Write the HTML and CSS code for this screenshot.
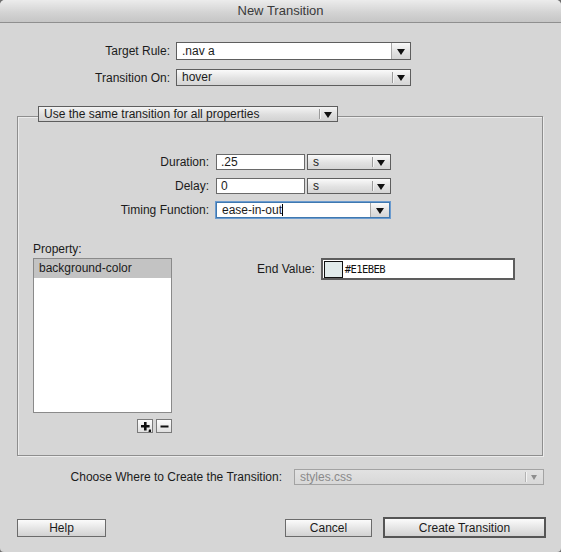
FILE: index.html
```html
<!DOCTYPE html>
<html>
<head>
<meta charset="utf-8">
<title>New Transition</title>
<link rel="stylesheet" href="styles.css">
</head>
<body>
<div class="window">
  <div class="titlebar">New Transition</div>
  <div class="content">
    <div class="top-form">
      <div class="row">
        <span class="lbl top-lbl">Target Rule:</span>
        <div class="select combo top-sel tall">
          <span class="val">.nav a</span>
          <span class="btn"><i class="arrow"></i></span>
        </div>
      </div>
      <div class="row row2">
        <span class="lbl top-lbl">Transition On:</span>
        <div class="select top-sel mid">
          <span class="val">hover</span>
          <span class="btn divided"><i class="arrow"></i></span>
        </div>
      </div>
    </div>

    <div class="group">
      <div class="select legend">
        <span class="val">Use the same transition for all properties</span>
        <span class="btn divided"><i class="arrow"></i></span>
      </div>

      <div class="timing">
        <div class="trow">
          <span class="lbl t-lbl">Duration:</span>
          <div class="input num">.25</div>
          <div class="select unit">
            <span class="val">s</span>
            <span class="btn divided"><i class="arrow"></i></span>
          </div>
        </div>
        <div class="trow">
          <span class="lbl t-lbl">Delay:</span>
          <div class="input num">0</div>
          <div class="select unit">
            <span class="val">s</span>
            <span class="btn divided"><i class="arrow"></i></span>
          </div>
        </div>
        <div class="trow">
          <span class="lbl t-lbl">Timing Function:</span>
          <div class="select combo focus">
            <span class="val">ease-in-out<i class="caret"></i></span>
            <span class="btn"><i class="arrow"></i></span>
          </div>
        </div>
      </div>

      <div class="props">
        <div class="prop-col">
          <div class="lbl prop-lbl">Property:</div>
          <div class="listbox">
            <div class="item selected">background-color</div>
          </div>
          <div class="pm">
            <span class="pmbtn plus">
              <svg width="11" height="11" viewBox="0 0 11 11"><path d="M4 1h2.6v3H9.6v2.6H6.6v3H4v-3H1V4h3z" fill="#111"/><path d="M9 8.5h2v2.5H8.5z" fill="#111"/></svg>
            </span>
            <span class="pmbtn minus">
              <svg width="11" height="11" viewBox="0 0 11 11"><rect x="1.5" y="4.5" width="8" height="2" fill="#111"/></svg>
            </span>
          </div>
        </div>
        <div class="end-col">
          <span class="lbl">End Value:</span>
          <div class="color-input">
            <span class="swatch"></span>
            <span class="hex">#E1EBEB</span>
          </div>
        </div>
      </div>
    </div>

    <div class="where-row">
      <span class="lbl">Choose Where to Create the Transition:</span>
      <div class="select disabled where-sel">
        <span class="val">styles.css</span>
        <span class="btn divided"><i class="arrow"></i></span>
      </div>
    </div>

    <div class="buttons">
      <button class="pbtn help">Help</button>
      <div class="spacer"></div>
      <button class="pbtn cancel">Cancel</button>
      <button class="pbtn default">Create Transition</button>
    </div>
  </div>
</div>
</body>
</html>
```

FILE: styles.css
```css
html, body {
  margin: 0;
  padding: 0;
  background: #6e6e6e;
}
body {
  font-family: "Liberation Sans", Arial, sans-serif;
  font-size: 12px;
  color: #1b1b1b;
}
.window {
  width: 561px;
  height: 552px;
  background: #d6d6d6;
  border-radius: 5px 5px 4px 4px;
  overflow: hidden;
}
.titlebar {
  height: 22px;
  line-height: 22px;
  text-align: center;
  font-size: 13px;
  color: #3a3a3a;
  background: linear-gradient(#ececec, #d2d2d2 60%, #c6c6c6);
  border-bottom: 1px solid #8f8f8f;
}
.content {
  padding-top: 19px;
}
.lbl {
  white-space: nowrap;
}
.row {
  display: flex;
  align-items: center;
}
.row2 {
  margin-top: 9px;
}
.top-lbl {
  width: 170px;
  text-align: right;
  margin-right: 6px;
}

/* select widget */
.select {
  display: flex;
  box-sizing: border-box;
  border: 1px solid #5e5e5e;
  background: linear-gradient(#fafafa, #e2e2e2 55%, #d5d5d5);
  height: 16px;
  align-items: stretch;
}
.select .val {
  flex: 1;
  padding-left: 5px;
  line-height: 14px;
  white-space: nowrap;
  overflow: hidden;
  position: relative;
}
.select .btn {
  width: 18px;
  display: flex;
  align-items: center;
  justify-content: center;
  position: relative;
}
.select .btn.divided::before {
  content: "";
  position: absolute;
  left: 0;
  top: 2px;
  bottom: 2px;
  border-left: 1px solid #9a9a9a;
  box-shadow: 1px 0 0 #f4f4f4;
}
.arrow {
  display: block;
  width: 0;
  height: 0;
  border-left: 4px solid transparent;
  border-right: 4px solid transparent;
  border-top: 6px solid #111;
  margin-top: 1px;
}
.select.combo .val {
  background: #fff;
}
.select.combo .btn {
  border-left: 1px solid #a8a8a8;
}
.top-sel {
  width: 235px;
}
.top-sel.tall {
  height: 18px;
}
.top-sel.tall .val {
  line-height: 16px;
}
.top-sel.mid {
  height: 17px;
}
.top-sel.mid .val {
  line-height: 15px;
}

/* group box */
.group {
  margin-top: 30px;
  margin-left: 17px;
  width: 526px;
  height: 340px;
  box-sizing: border-box;
  border: 1px solid #8e8e8e;
  box-shadow: inset 1px 1px 0 #ececec, 1px 1px 0 #ececec;
}
.legend {
  width: 300px;
  margin-top: -11px;
  margin-left: 20px;
  background: linear-gradient(#f4f4f4, #dedede 55%, #d2d2d2);
}
.timing {
  margin-top: 32px;
  display: flex;
  flex-direction: column;
  gap: 8px;
}
.trow {
  display: flex;
  align-items: center;
}
.t-lbl {
  width: 191px;
  text-align: right;
  margin-right: 7px;
}
.input {
  box-sizing: border-box;
  height: 16px;
  line-height: 14px;
  background: #fff;
  border: 1px solid #6a6a6a;
  padding-left: 4px;
}
.num {
  width: 89px;
}
.unit {
  width: 84px;
  margin-left: 2px;
}
.focus {
  width: 174px;
  border-color: #3f78b0;
  box-shadow: 0 0 0 1px #6b9bcf;
}
.caret {
  display: inline-block;
  width: 1px;
  height: 12px;
  background: #000;
  vertical-align: -2px;
}

/* properties */
.props {
  display: flex;
  margin-top: 24px;
}
.prop-col {
  margin-left: 15px;
  width: 139px;
}
.prop-lbl {
  line-height: 14px;
  margin-bottom: 2px;
}
.listbox {
  box-sizing: border-box;
  height: 155px;
  background: #fff;
  border: 1px solid #8a8a8a;
  box-shadow: inset 0 1px 0 #9c9c9c;
}
.item {
  height: 19px;
  line-height: 19px;
  padding-left: 5px;
}
.item.selected {
  background: #c3c3c3;
}
.pm {
  display: flex;
  justify-content: flex-end;
  gap: 3px;
  margin-top: 6px;
}
.pmbtn {
  box-sizing: border-box;
  width: 16px;
  height: 14px;
  border: 1px solid #7a7a7a;
  background: linear-gradient(#fdfdfd, #e0e0e0);
  display: flex;
  align-items: center;
  justify-content: center;
}
.end-col {
  margin-left: 85px;
  margin-top: 16px;
  display: flex;
  align-items: center;
  height: 22px;
}
.end-col .lbl {
  margin-right: 6px;
}
.color-input {
  box-sizing: border-box;
  width: 194px;
  height: 22px;
  background: #fff;
  border: 2px solid #5d5d5d;
  display: flex;
  align-items: center;
  padding-left: 1px;
}
.swatch {
  box-sizing: border-box;
  width: 19px;
  height: 17px;
  background: #e1ebeb;
  border: 1px solid #111;
  margin-right: 2px;
}
.hex {
  font-family: "DejaVu Sans Mono", "Liberation Mono", monospace;
  font-size: 10.5px;
  letter-spacing: -0.6px;
  color: #111;
}

/* where */
.where-row {
  display: flex;
  align-items: center;
  justify-content: flex-end;
  padding-right: 17px;
  margin-top: 13px;
}
.where-row .lbl {
  margin-right: 12px;
}
.where-sel {
  width: 250px;
}
.select.disabled {
  border-color: #a3a3a3;
  background: linear-gradient(#e2e2e2, #d8d8d8);
  color: #8a8a8a;
}
.select.disabled .arrow {
  border-top-color: #8e8e8e;
  border-left-width: 3px;
  border-right-width: 3px;
  border-top-width: 5px;
}
.select.disabled .btn.divided::before {
  border-left-color: #b3b3b3;
}

/* buttons */
.buttons {
  display: flex;
  align-items: center;
  margin-top: 32px;
  padding-left: 17px;
  padding-right: 15px;
}
.spacer {
  flex: 1;
}
.pbtn {
  box-sizing: border-box;
  font-family: "Liberation Sans", Arial, sans-serif;
  font-size: 12px;
  color: #1b1b1b;
  height: 18px;
  padding: 0;
  border: 1px solid #6b6b6b;
  background: linear-gradient(#fbfbfb, #e6e6e6 50%, #d2d2d2);
  border-radius: 0;
}
.help {
  width: 89px;
}
.cancel {
  width: 87px;
  margin-right: 11px;
}
.default {
  width: 163px;
  height: 21px;
  border: 2px solid #555;
}
```
